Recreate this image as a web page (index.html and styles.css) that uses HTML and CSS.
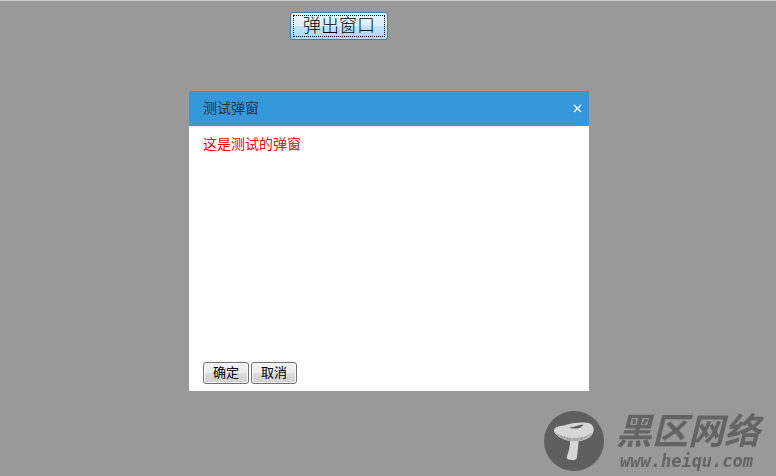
FILE: index.html
```
<!DOCTYPE html>
<html lang="zh-CN">
<head>
  <meta charset="UTF-8">
  <meta name="viewport" content="width=device-width, initial-scale=1">
  <title>测试弹窗</title>
  <link rel="stylesheet" href="styles.css">
</head>
<body>
  <div class="page">
    <button type="button" class="open-btn" id="openBtn">弹出窗口</button>

    <div class="dialog" id="dialog" role="dialog" aria-labelledby="dialogTitle">
      <div class="dialog-header">
        <span id="dialogTitle">测试弹窗</span>
        <button type="button" class="close-btn" aria-label="关闭">
          <svg width="9" height="9" viewBox="0 0 9 9">
            <path d="M1 1l7 7M8 1l-7 7" stroke="#fff" stroke-width="1.3" fill="none"/>
          </svg>
        </button>
      </div>
      <div class="dialog-body">这是测试的弹窗</div>
      <div class="dialog-footer">
        <button type="button" class="btn">确定</button>
        <button type="button" class="btn">取消</button>
      </div>
    </div>
  </div>

  <div class="watermark">
    <svg class="logo" width="60" height="60" viewBox="0 0 60 60">
      <circle cx="30" cy="30" r="30" fill="#5f5f5f"/>
      <path d="M26 28L35 28C34.300 33 33.800 40 33 46C32.500 49 30 49.500 27 49C24 48.700 22.300 48 23 45C25 40 26.300 34 26 28Z" fill="#d6d6d6"/>
      <path d="M10 19C10.500 15 17 15.500 23 13.500C30 11.500 42 10.500 47 13C51 16.500 50.500 22 46 26C40 30.500 31 31 24 29.500C16 27.500 9.500 23 10 19Z" fill="#d6d6d6"/>
      <path d="M11 21C17 25 23 27 29 27C36 27 43 25.500 48.500 21C47 26 40 30.500 30 30.300C21 30 13 26.500 11 21Z" fill="#b4b4b4"/>
      <path d="M14 23l1 2M17 24l1 3M20 25l1 3M23 26l1 3M26 27v3M30 27v3M34 27l-1 3M38 26l-1 3M42 25l-1 2" stroke="#858585" stroke-width="0.6"/>
      <path d="M25.500 16.500C30 16 35 14 39.500 13.500C38.500 16 34 18 30 17.500C28 17.300 26.500 17.500 25.500 16.500Z" fill="#5f5f5f"/>
    </svg>
    <div class="watermark-text">
      <span class="watermark-name">黑区网络</span>
      <span class="watermark-url">www.heiqu.com</span>
    </div>
  </div>

  <script>
    const dialog = document.getElementById('dialog');

    document.getElementById('openBtn').addEventListener('click', () => {
      dialog.hidden = false;
    });

    dialog.querySelectorAll('button').forEach(btn => {
      btn.addEventListener('click', () => {
        dialog.hidden = true;
      });
    });
  </script>
</body>
</html>
```
FILE: styles.css
```
body {
  margin: 0;
  min-height: 100vh;
  box-sizing: border-box;
  border-top: 1px solid #ccc;
  background: #999;
  color: #333;
  font-family: "Liberation Sans", "Noto Sans CJK SC", sans-serif;
  font-size: 14px;
}
button {
  font-family: inherit;
  cursor: pointer;
}
.page {
  display: flex;
  flex-direction: column;
  align-items: center;
  padding-top: 11px;
}
.open-btn {
  height: 28px;
  margin-right: 98px;
  padding: 0 12px;
  border: 1px solid #3c7fb1;
  border-radius: 3px;
  background: linear-gradient(#eaf6fd 0%, #d9f0fc 50%, #bee6fd 50%, #a7d9f5 100%);
  color: #000;
  font-size: 18px;
  font-weight: 300;
  line-height: 24px;
  outline: 1px dotted #000;
  outline-offset: -4px;
}
.dialog {
  display: flex;
  flex-direction: column;
  width: 400px;
  max-width: 100%;
  min-height: 300px;
  margin: 51px 0 0 2px;
  background: #fff;
}
.dialog[hidden] {
  display: none;
}
.dialog-header {
  display: flex;
  align-items: center;
  justify-content: space-between;
  padding: 0 7px 0 14px;
  background: #3498db;
  line-height: 35px;
}
.close-btn {
  display: flex;
  padding: 0;
  border: none;
  background: none;
}
.dialog-body {
  flex: 1;
  padding: 8px 14px;
  color: #f00;
  line-height: 20px;
}
.dialog-footer {
  display: flex;
  gap: 2px;
  padding: 0 14px 7px;
}
.btn {
  height: 22px;
  padding: 0 9px;
  border: 1px solid #707070;
  border-radius: 3px;
  background: linear-gradient(#f2f2f2 0%, #ebebeb 50%, #ddd 50%, #cfcfcf 100%);
  box-shadow: inset 0 0 0 1px #f8f8f8;
  color: #000;
  font-size: 13px;
  line-height: 18px;
}
.watermark {
  position: fixed;
  right: 16px;
  bottom: 5px;
  display: flex;
  align-items: flex-end;
  gap: 12px;
  color: #646464;
  font-style: italic;
  font-weight: bold;
}
.watermark-text {
  display: flex;
  flex-direction: column;
}
.watermark-name {
  font-size: 36px;
  line-height: 38px;
}
.watermark-url {
  padding-left: 4px;
  font-family: "DejaVu Sans Mono", monospace;
  font-size: 17px;
  line-height: 20px;
}
```
